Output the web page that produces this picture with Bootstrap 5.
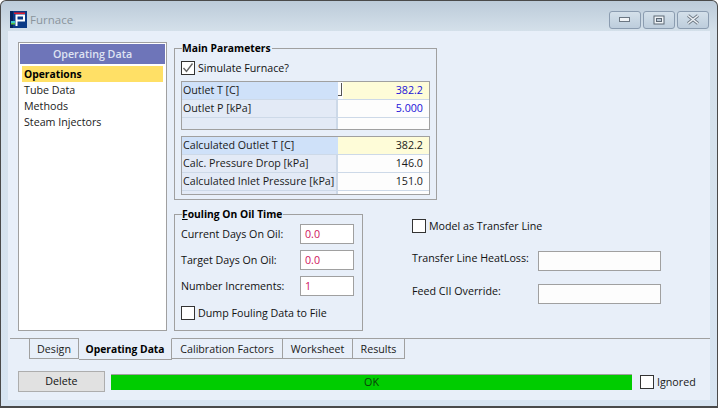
<!DOCTYPE html>
<html lang="en">

<head>
    <meta charset="UTF-8">
    <meta name="viewport" content="width=device-width, initial-scale=1.0">
    <title>Furnace</title>
    <link href="https://cdn.jsdelivr.net/npm/bootstrap@5.3.0/dist/css/bootstrap.min.css" rel="stylesheet">
    <style>
        html, body { width: 718px; height: 408px; overflow: hidden; margin: 0; background: #fff; }
        body { font-family: "Open Sans", "Liberation Sans", sans-serif; font-size: 10.7px; line-height: 16px; color: #1a1a1a; }
        .win-frame { width: 718px; height: 408px; border: 1px solid #4a4a4a; border-bottom-width: 2px; border-radius: 6px 6px 0 0; background: linear-gradient(#bccbd9 0, #d4e0ea 30px, #d7e4f1 100%); padding: 0 7px 6px; }
        .win-title { height: 30px; padding: 7px 1px 0 2px; }
        .win-title-text { color: #8a949c; font-size: 11.5px; margin-left: 3px; }
        .win-btn { width: 32px; height: 18px; border: 1px solid #8b9cb0; border-radius: 3px; background: linear-gradient(#d4e0ea, #bdcddc); margin-left: 2px; }
        .win-client { height: 369px; background: #e8eff9; position: relative; padding: 11px 0 0 10px; }
        .side-panel { flex: none; width: 149px; height: 289px; border: 1px solid #a0a0a0; background: #fff; padding: 1px; }
        .side-head { background: #6e75b9; color: #dfe3f2; height: 20px; line-height: 20px; text-align: center; font-weight: 600; margin-bottom: 2px; }
        .side-item { height: 16px; line-height: 16px; margin: 0 2px; padding-left: 2px; }
        .side-item.is-active { background: #ffe066; font-weight: 700; font-size: 10.3px; color: #000; }
        .main-col { flex: none; margin-left: 7px; }
        .grp { border: 1px solid #a0a0a0; padding: 0 6px; margin: 0; min-width: 0; }
        .grp legend { float: none; width: auto; font-size: 10.3px; line-height: 13px; font-weight: 700; color: #000; padding: 0 1px 0 0; margin: 0 0 0 1px; }
        .grp-main { height: 158px; width: 263px; }
        .lower-row { margin-top: 8px; }
        .grp-foul { flex: none; height: 123px; width: 189px; }
        .chk { width: 14px; height: 14px; border: 1px solid #333; background: #fff; flex: none; margin-right: 3px; display: flex; }
        .chk-row { height: 14px; line-height: 14px; color: #111; }
        .simulate-row { margin-top: 6px; margin-bottom: 6px; }
        .dump-row { margin-top: 10px; }
        .grid-box { border: 1px solid #a0a0a0; width: 249px; background: #fff; }
        .grid-box + .grid-box { margin-top: 6px; }
        .grid-row { display: flex; height: 18px; border-bottom: 1px solid #cdd9e8; line-height: 16px; }
        .grid-row:last-child { border-bottom: 0; }
        .grid-row.is-stub { height: 11px; }
        .grid-row.is-sliver { height: 3px; }
        .grid-lbl { flex: none; width: 156px; background: #e3eaf6; padding-left: 1px; border-right: 2px solid #cdd9e8; white-space: nowrap; }
        .grid-lbl.is-current { background: #cfe1f9; border-right-color: #cfe1f9; }
        .grid-val { flex: 1; text-align: right; padding-right: 6px; background: #fdfdfd; }
        .grid-val.is-hot { background: #fefcd8; }
        .grid-val.has-mark { background: linear-gradient(to right, #fdfdfd 5px, #fefcd8 5px); }
        .val-blue { color: #1a12d8; }
        .cell-mark { float: left; width: 4px; height: 13px; border: 1px solid #555; border-width: 0 1px 1px 0; margin-top: 1px; }
        .field-row { display: flex; align-items: center; height: 20px; margin-bottom: 6px; color: #111; }
        .field-row.is-first { margin-top: 3px; }
        .field-box { border: 1px solid #a0a0a0; background: #fff; height: 20px; line-height: 18px; padding-left: 4px; }
        .field-pink { width: 54px; margin-left: auto; margin-right: 2px; color: #d0105a; }
        .field-wide { width: 123px; background: #fdfdfd; }
        .extra-col { margin-left: 49px; padding-top: 11px; width: 250px; }
        .line-first { margin-top: 18px; margin-bottom: 13px; }
        .extra-lbl { width: 126px; flex: none; margin-bottom: 6px; }
        .tab-strip { position: absolute; left: 2px; right: 0; top: 307px; height: 22px; border-top: 1px solid #a0a0a0; padding-left: 19px; }
        .tab-item { flex: none; height: 20px; border: 1px solid #a0a0a0; border-top: 0; border-left: 0; line-height: 21px; background: #e8eff9; text-align: center; }
        .tab-item:nth-child(1) { width: 50px; border-left: 1px solid #a0a0a0; }
        .tab-item:nth-child(2) { width: 93px; }
        .tab-item:nth-child(3) { width: 111px; }
        .tab-item:nth-child(4) { width: 70px; }
        .tab-item:nth-child(5) { width: 52px; }
        .tab-item.is-open { height: 22px; font-weight: 700; font-size: 10.3px; color: #000; border-top: 1px solid #e8eff9; margin-top: -1px; line-height: 21px; }
        .status-row { position: absolute; left: 10px; top: 340px; width: 679px; height: 21px; }
        .del-btn { flex: none; width: 87px; height: 21px; border: 1px solid #adadad; background: #e1e1e1; text-align: center; line-height: 19px; color: #111; }
        .ok-bar { flex: none; width: 521px; height: 16px; margin-left: 6px; border-top: 1px solid #a0a0a0; background: #00cc00; text-align: center; line-height: 15px; color: #0a3d0a; }
        .ign { margin-left: 8px; line-height: 14px; }
    </style>
</head>

<body>
    <div class="win-frame">
        <!-- title bar -->
        <div class="win-title d-flex align-items-center">
            <svg width="17" height="17" viewBox="0 0 17 17">
                <rect width="17" height="17" fill="#0b3a86"/>
                <rect x="0" y="0" width="3" height="17" fill="#06245c"/>
                <path d="M4 1.500h11v1.500H4z" fill="#e01b2e"/>
                <path d="M6.500 3.500V15M6.500 4.500h7.500v5H6.500" fill="none" stroke="#fff" stroke-width="2"/>
                <rect x="1" y="10" width="4" height="2" fill="#3ec7c7"/>
                <rect x="1" y="12" width="4" height="1.500" fill="#58c040"/>
            </svg>
            <span class="win-title-text">Furnace</span>
            <div class="ms-auto d-flex align-items-center">
                <div class="win-btn d-flex align-items-center justify-content-center">
                    <svg width="12" height="6" viewBox="0 0 12 6"><rect x=".5" y=".5" width="10" height="4" fill="#f0f3f6" stroke="#6b7682"/></svg>
                </div>
                <div class="win-btn d-flex align-items-center justify-content-center">
                    <svg width="12" height="10" viewBox="0 0 12 10"><rect x="1" y="1" width="10" height="8" fill="#eef2f6" stroke="#5d6874"/><rect x="3.500" y="3.500" width="5" height="3" fill="#b8c6d4" stroke="#5d6874"/></svg>
                </div>
                <div class="win-btn d-flex align-items-center justify-content-center">
                    <svg width="14" height="11" viewBox="0 0 14 11"><path d="M2 1.500l10 8M12 1.500l-10 8" stroke="#6b7682" stroke-width="3.200"/><path d="M2 1.500l10 8M12 1.500l-10 8" stroke="#eef2f6" stroke-width="1.600"/></svg>
                </div>
            </div>
        </div>

        <div class="win-client d-flex">
            <!-- left list -->
            <div class="side-panel">
                <div class="side-head">Operating Data</div>
                <div class="side-item is-active">Operations</div>
                <div class="side-item">Tube Data</div>
                <div class="side-item">Methods</div>
                <div class="side-item">Steam Injectors</div>
            </div>

            <div class="main-col">
                <fieldset class="grp grp-main">
                    <legend>Main Parameters</legend>
                    <div class="chk-row simulate-row d-flex align-items-center">
                        <span class="chk">
                            <svg width="12" height="12" viewBox="0 0 12 12"><path d="M1.500 6l3 3.500L10.500 1.500" fill="none" stroke="#666" stroke-width="1.400"/></svg>
                        </span>Simulate Furnace?
                    </div>
                    <div class="grid-box">
                        <div class="grid-row"><div class="grid-lbl is-current">Outlet T [C]</div><div class="grid-val has-mark val-blue"><span class="cell-mark"></span>382.2</div></div>
                        <div class="grid-row"><div class="grid-lbl">Outlet P [kPa]</div><div class="grid-val val-blue">5.000</div></div>
                        <div class="grid-row is-stub"><div class="grid-lbl"></div><div class="grid-val"></div></div>
                    </div>
                    <div class="grid-box">
                        <div class="grid-row"><div class="grid-lbl is-current">Calculated Outlet T [C]</div><div class="grid-val is-hot">382.2</div></div>
                        <div class="grid-row"><div class="grid-lbl">Calc. Pressure Drop [kPa]</div><div class="grid-val">146.0</div></div>
                        <div class="grid-row"><div class="grid-lbl">Calculated Inlet Pressure [kPa]</div><div class="grid-val">151.0</div></div>
                        <div class="grid-row is-sliver"><div class="grid-lbl"></div><div class="grid-val"></div></div>
                    </div>
                </fieldset>

                <div class="lower-row d-flex">
                    <fieldset class="grp grp-foul">
                        <legend><u>F</u>ouling On Oil Time</legend>
                        <div class="field-row is-first"><span>Current Days On Oil:</span><div class="field-box field-pink">0.0</div></div>
                        <div class="field-row"><span>Target Days On Oil:</span><div class="field-box field-pink">0.0</div></div>
                        <div class="field-row"><span>Number Increments:</span><div class="field-box field-pink">1</div></div>
                        <div class="chk-row dump-row d-flex align-items-center"><span class="chk"></span>Dump Fouling Data to File</div>
                    </fieldset>

                    <div class="extra-col">
                        <div class="chk-row d-flex align-items-center"><span class="chk"></span>Model as Transfer Line</div>
                        <div class="field-row line-first"><span class="extra-lbl">Transfer Line HeatLoss:</span><div class="field-box field-wide"></div></div>
                        <div class="field-row"><span class="extra-lbl">Feed CII Override:</span><div class="field-box field-wide"></div></div>
                    </div>
                </div>
            </div>

            <!-- bottom tabs -->
            <div class="tab-strip d-flex">
                <div class="tab-item">Design</div>
                <div class="tab-item is-open">Operating Data</div>
                <div class="tab-item">Calibration Factors</div>
                <div class="tab-item">Worksheet</div>
                <div class="tab-item">Results</div>
            </div>

            <div class="status-row d-flex align-items-center">
                <div class="del-btn">Delete</div>
                <div class="ok-bar">OK</div>
                <div class="ign d-flex align-items-center"><span class="chk"></span>Ignored</div>
            </div>
        </div>
    </div>
</body>

</html>
